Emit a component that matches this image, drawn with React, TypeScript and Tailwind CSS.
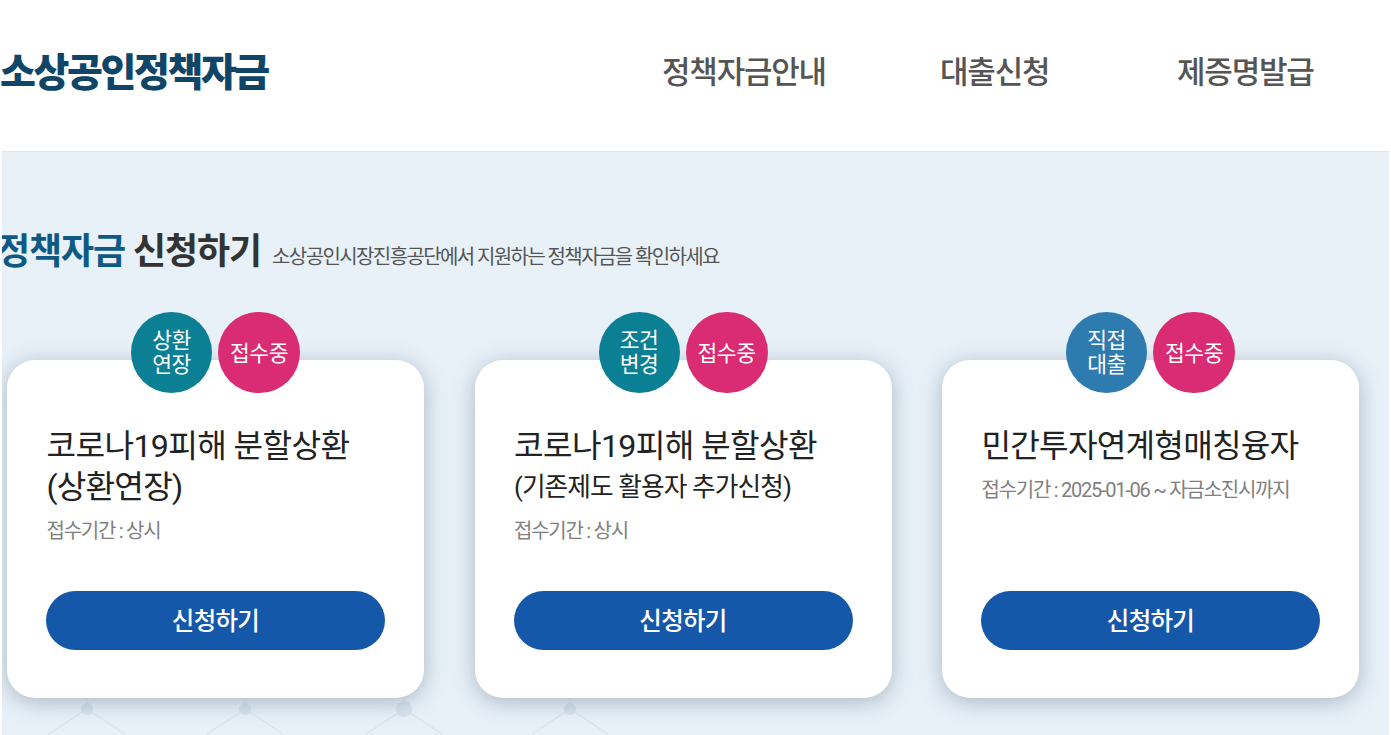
import React from 'react';

const navItems = [
  { label: '정책자금안내', className: 'w-[164px] mr-[114px]' },
  { label: '대출신청', className: 'w-[109px] mr-[128px]' },
  { label: '제증명발급', className: 'w-[135px]' },
];

const cards = [
  {
    badge: ['상환', '연장'],
    badgeColor: 'bg-[#0b8095]',
    title: '코로나19피해 분할상환',
    titleClass: 'tracking-[-0.65px]',
    second: '(상환연장)',
    secondClass: 'text-[32.2px] leading-[41px] tracking-[-0.8px]',
    period: '접수기간 : 상시',
  },
  {
    badge: ['조건', '변경'],
    badgeColor: 'bg-[#0b8095]',
    title: '코로나19피해 분할상환',
    titleClass: 'tracking-[-0.65px]',
    second: '(기존제도 활용자 추가신청)',
    secondClass: 'text-[25.7px] leading-[41px] tracking-[-0.9px]',
    period: '접수기간 : 상시',
  },
  {
    badge: ['직접', '대출'],
    badgeColor: 'bg-[#2e7bb0]',
    title: '민간투자연계형매칭융자',
    titleClass: 'tracking-[-0.8px]',
    second: '',
    secondClass: '',
    period: '접수기간 : 2025-01-06 ~ 자금소진시까지',
  },
];

function Card({ card }: { card: (typeof cards)[number] }) {
  return (
    <div className="relative w-[417px] h-[338px] shrink-0 rounded-[28px] bg-white px-[39.5px] pt-[66px] shadow-[0_4px_22px_rgba(50,70,90,0.34)] flex flex-col">
      <div className="absolute left-[124px] top-[-48px] flex gap-[6px]">
        <div className={`w-[81px] h-[81px] rounded-full ${card.badgeColor} text-white text-[21.5px] leading-[24px] tracking-[-0.5px] flex flex-col items-center justify-center`}>
          <span>{card.badge[0]}</span>
          <span>{card.badge[1]}</span>
        </div>
        <div className="w-[82px] h-[81px] rounded-full bg-[#d92c73] pt-[3px] text-white text-[21.5px] tracking-[-0.5px] flex items-center justify-center">
          접수중
        </div>
      </div>
      <div className={`text-[32.2px] leading-[41px] ${card.titleClass} text-[#222222] whitespace-nowrap`}>{card.title}</div>
      {card.second && <div className={`${card.secondClass} text-[#222222] whitespace-nowrap`}>{card.second}</div>}
      <div className="mt-[9px] text-[20px] leading-[28px] tracking-[-1.25px] text-[#808080] whitespace-nowrap">{card.period}</div>
      <button className="absolute left-[39px] right-[39px] top-[231px] h-[59px] rounded-[30px] bg-[#1558a9] pt-[3px] text-white text-[24.5px] font-medium tracking-[-0.7px]">
        신청하기
      </button>
    </div>
  );
}

export default function App() {
  return (
    <div className="w-[1391px] h-[735px] overflow-hidden bg-white font-['Roboto','Noto_Sans_CJK_KR',sans-serif]">
      <header className="h-[151px] flex items-center justify-between pr-[79px]">
        <div className="text-[39px] leading-none font-black tracking-[-2.4px] text-[#0f4567] whitespace-nowrap mt-[-4px]">소상공인정책자금</div>
        <nav className="flex items-center mt-[-7px]">
          {navItems.map((item) => (
            <a key={item.label} className={`${item.className} text-[31px] leading-none font-medium tracking-[-1.2px] text-[#555555] whitespace-nowrap`}>
              {item.label}
            </a>
          ))}
        </nav>
      </header>
      <main className="relative mx-[2px] h-[584px] border-t border-[#dfe5ec] bg-[#e8f1f8] overflow-hidden">
        <svg className="absolute left-0 bottom-0" width="620" height="40" viewBox="0 0 620 40" fill="none">
          <g stroke="#dbe7f0" strokeWidth="1.5">
            <path d="M85 0V14M243 0V14M402 0V14M568 0V14" />
            <path d="M47 39L85 14L123 39M205 39L243 14L281 39M364 39L402 14L440 39M530 39L568 14L606 39" />
          </g>
          <g fill="#d6e4ee">
            <circle cx="85" cy="14" r="6" />
            <circle cx="243" cy="14" r="6" />
            <circle cx="402" cy="14" r="8" />
            <circle cx="568" cy="14" r="6" />
          </g>
        </svg>
        <div className="relative pt-[76px] flex items-end whitespace-nowrap">
          <h2 className="ml-[-5px] text-[36px] leading-[48px] font-bold tracking-[-1.1px] text-[#333333]">
            <span className="text-[#0f5a85]">정책자금</span> 신청하기
          </h2>
          <p className="ml-[11px] mb-[5px] text-[20px] leading-[28px] tracking-[-1.6px] text-[#555555]">
            소상공인시장진흥공단에서 지원하는 정책자금을 확인하세요
          </p>
        </div>
        <div className="relative mt-[84px] ml-[5px] flex gap-[50.5px]">
          {cards.map((card, i) => (
            <Card key={i} card={card} />
          ))}
        </div>
      </main>
    </div>
  );
}
